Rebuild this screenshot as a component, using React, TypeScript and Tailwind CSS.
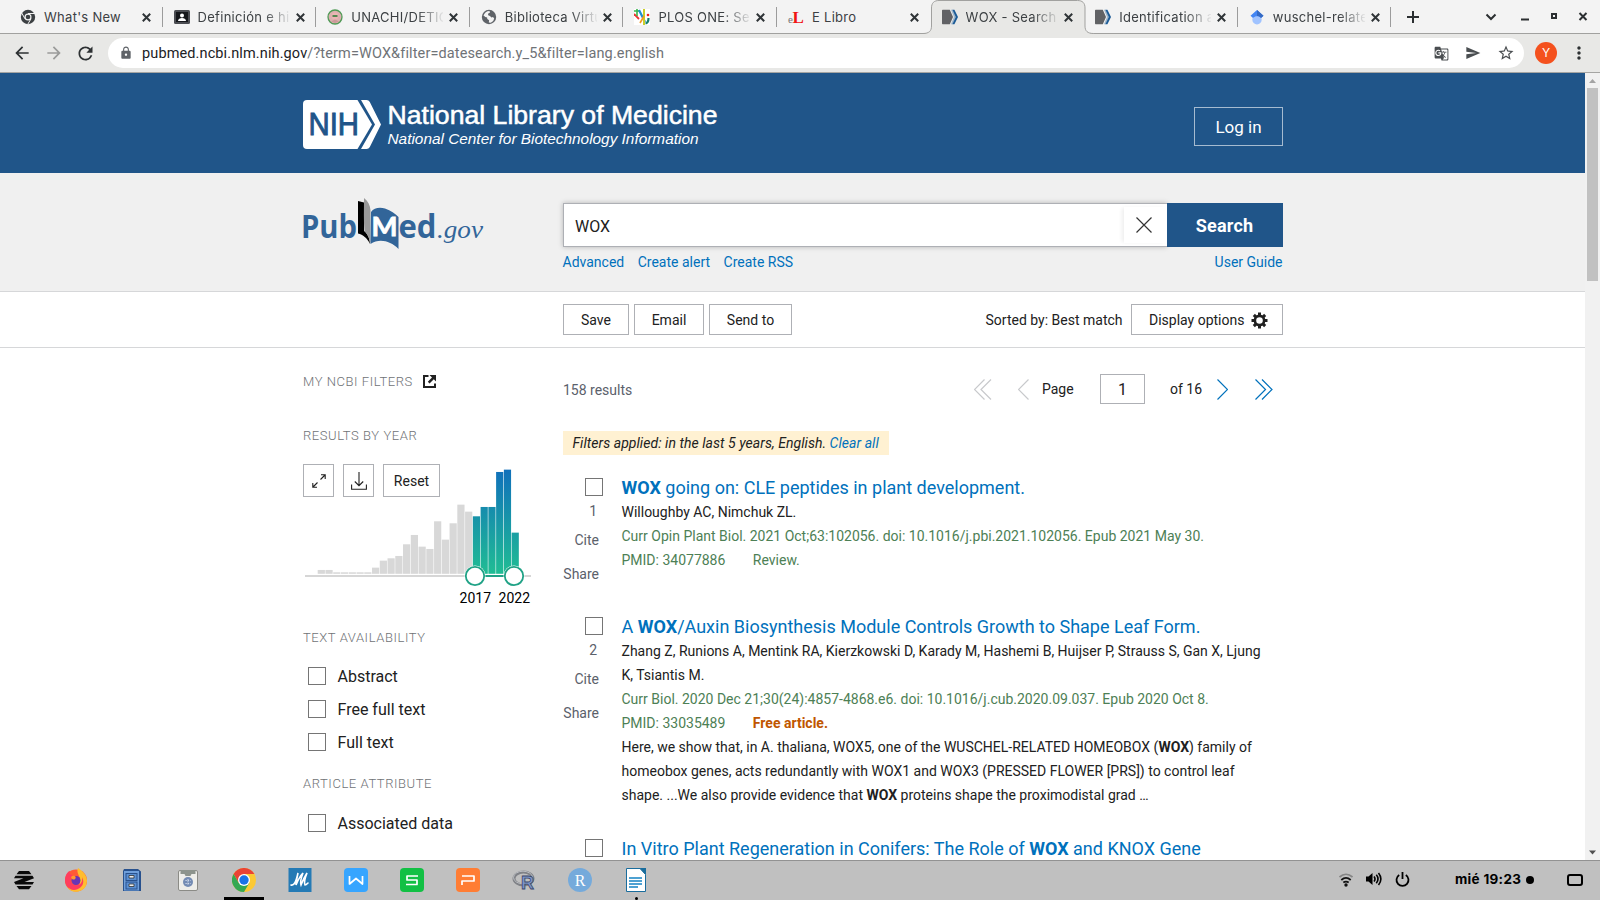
import React from "react";
import { MdArrowBack, MdArrowForward, MdRefresh, MdLock, MdStarBorder, MdMoreVert, MdSend, MdGTranslate } from "react-icons/md";

const UI = "font-['Inter',sans-serif]";

function CloseX() {
  return (
    <svg width="9" height="9" viewBox="0 0 9 9" className="shrink-0">
      <path d="M.8 .8L8.200 8.200M8.200 .8L.8 8.200" stroke="#2f3437" strokeWidth="2" />
    </svg>
  );
}

function ChromeGrey() {
  return (
    <svg width="16" height="16" viewBox="0 0 16 16">
      <circle cx="8" cy="8" r="7.200" fill="#3c4043" />
      <circle cx="8" cy="8" r="3.500" fill="#f3f3f3" />
      <circle cx="8" cy="8" r="2.300" fill="#3c4043" />
      <path d="M8 4.500H15M5 9.800L1.600 3.800M11 9.800L7.600 15.500" stroke="#f3f3f3" strokeWidth="1" />
    </svg>
  );
}

function PersonCard() {
  return (
    <svg width="16" height="16" viewBox="0 0 16 16">
      <rect x="0" y="1" width="16" height="14" rx="1.500" fill="#4b4d52" />
      <rect x="2" y="3" width="12" height="10" fill="#15171b" />
      <circle cx="8" cy="6.400" r="2" fill="#fff" />
      <path d="M4 12c0-4 8-4 8 0z" fill="#fff" />
    </svg>
  );
}

function Seal() {
  return (
    <svg width="16" height="16" viewBox="0 0 16 16">
      <circle cx="8" cy="8" r="7" fill="#dcb0b0" stroke="#4f9a55" strokeWidth="1.300" />
      <circle cx="8" cy="7" r="3.400" fill="#ecb5b4" />
      <path d="M5.500 7h5" stroke="#2f7d3a" strokeWidth="1.600" />
      <path d="M4 12.500l4-2 4 2-4 1.500z" fill="#c99" />
    </svg>
  );
}

function Globe() {
  return (
    <svg width="16" height="16" viewBox="0 0 16 16">
      <circle cx="8" cy="8" r="7.200" fill="#5f6368" />
      <path d="M2.500 6.500c1-3 3-4.500 6-4.600l.5 1.600-2 1.200.2 1.600 1.800.6 1.400 1.600 1.600-.4 1.200 1.400-1 2.400-2.400 1.800-2-.2.3-2.200-1.800-1.400-.2-1.400-1.800-.4z" fill="#f3f3f3" />
    </svg>
  );
}

function Plos() {
  return (
    <svg width="16" height="16" viewBox="0 0 16 16">
      <rect width="16" height="16" fill="#fff" />
      <path d="M0 5L5 10" stroke="#e33" strokeWidth="1.800" />
      <path d="M3 0v7M0 2h5" stroke="#39b54a" strokeWidth="1.600" />
      <path d="M5 1L11 13" stroke="#1f8fd0" strokeWidth="2.200" />
      <path d="M10 0V16" stroke="#c9cf2a" strokeWidth="2" />
      <path d="M6 14L10 7" stroke="#f39a1e" strokeWidth="1.600" />
      <circle cx="14" cy="6" r="1.300" fill="#e22" />
      <path d="M14.500 9c0 3-1 5-3 5.500" stroke="#15806c" strokeWidth="2.200" fill="none" />
    </svg>
  );
}

function ELibro() {
  return (
    <svg width="16" height="16" viewBox="0 0 16 16" className="overflow-visible">
      <text x="0" y="14" fontSize="11" fontFamily="Liberation Serif, serif" fill="#777">e</text>
      <text x="4.500" y="14" fontSize="17" fontWeight="700" fontFamily="Liberation Serif, serif" fill="#f01414">L</text>
    </svg>
  );
}

function Ncbi() {
  return (
    <svg width="16" height="16" viewBox="0 0 16 16">
      <path d="M1 .8h6.800L11 8l-3.200 7.200H1c-.6 0-1-.4-1-1V1.800c0-.6.4-1 1-1z" fill="#616265" />
      <path d="M9 .8h1.700L14 8l-3.300 7.200H9L12 8z" fill="#9fb6cb" />
      <path d="M10.400 .8h2L16 8l-3.600 7.200h-2L13.800 8z" fill="#1a5a96" />
    </svg>
  );
}

function Scholar() {
  return (
    <svg width="16" height="16" viewBox="0 0 16 16">
      <circle cx="8" cy="10.800" r="4.700" fill="#a0c3ff" />
      <path d="M8 1L1.500 6.800 4 9c2-2.400 6-2.400 8 0l2.500-2.200z" fill="#4285f4" />
      <path d="M8 1l6.500 5.800L12 9C11 7.500 9.500 7 8 7z" fill="#356ac3" />
    </svg>
  );
}

const tabs: { title: string; icon: React.ReactNode; active?: boolean; sep: boolean }[] = [
  { title: "What's New", icon: <ChromeGrey />, sep: true },
  { title: "Definición e hi", icon: <PersonCard />, sep: true },
  { title: "UNACHI/DETIC", icon: <Seal />, sep: true },
  { title: "Biblioteca Virtu", icon: <Globe />, sep: true },
  { title: "PLOS ONE: Se", icon: <Plos />, sep: true },
  { title: "E Libro", icon: <ELibro />, sep: false },
  { title: "WOX - Search", icon: <Ncbi />, active: true, sep: false },
  { title: "Identification a", icon: <Ncbi />, sep: true },
  { title: "wuschel-relate", icon: <Scholar />, sep: true },
];

function TabStrip() {
  return (
    <div className="flex h-[34px] shrink-0 border-b border-[#a1a19f] bg-[#f3f3f3]">
      <div className="w-[9px] shrink-0" />
      {tabs.map((t) => (
        <div key={t.title} className="relative flex h-[34px] w-[153.600px] shrink-0 items-center pl-[11px]">
          {t.active && (
            <svg className="absolute left-[-8px] top-0" width="172" height="34" viewBox="0 0 172 34">
              <path d="M0 34V33.500C6 33.500 8.500 31 8.500 26V8C8.500 3 11 .5 16 .5H154.500C159.500 .5 162 3 162 8V26C162 31 164.500 33.500 170.500 33.500V34Z" fill="#e8e8e6" />
              <path d="M0 33.500C6 33.500 8.500 31 8.500 26V8C8.500 3 11 .5 16 .5H154.500C159.500 .5 162 3 162 8V26C162 31 164.500 33.500 170.500 33.500" fill="none" stroke="#a1a19f" />
            </svg>
          )}
          <div className="relative flex items-center">
            {t.icon}
            <span className={`${UI} ml-2 w-[92px] whitespace-nowrap text-[13px] leading-[18px] tracking-[0.280px] text-[#3c4043] ${t.title.length > 11 ? "[mask-image:linear-gradient(to_right,black_72%,transparent_102%)]" : ""}`}>
              {t.title}
            </span>
            <span className="ml-[6px] flex">
              <CloseX />
            </span>
          </div>
          {t.sep && <span className="ml-auto h-5 w-px bg-[#9c9c9c]" />}
        </div>
      ))}
      <div className="flex flex-1 items-center">
        <svg width="12" height="12" viewBox="0 0 12 12" className="ml-[15.600px] shrink-0">
          <path d="M6 0V12M0 6H12" stroke="#2b2f31" strokeWidth="2" />
        </svg>
        <svg width="150" height="34" viewBox="1450 0 150 34" className="ml-auto shrink-0">
          <path d="M1486.500 14.500l4.500 4.500 4.500-4.500" fill="none" stroke="#2b2f31" strokeWidth="2" />
          <path d="M1521 19.500h8" stroke="#2b2f31" strokeWidth="2" />
          <rect x="1552" y="14" width="4" height="4" fill="none" stroke="#2b2f31" strokeWidth="2" />
          <path d="M1579.500 13l7 7m0-7l-7 7" stroke="#2b2f31" strokeWidth="2" />
        </svg>
      </div>
    </div>
  );
}

function AddressBar() {
  return (
    <div className="flex h-[39px] shrink-0 items-center border-b border-[#a5a5a3] bg-[#e8e8e6]">
      <div className="flex w-[108px] items-center pl-[12px]">
        <MdArrowBack size={20} color="#2d3133" />
        <MdArrowForward size={20} color="#9a9b9a" className="ml-[12px]" />
        <MdRefresh size={21} color="#2d3133" className="ml-[11px]" />
      </div>
      <div className="flex h-[30px] w-[1416px] items-center rounded-full bg-white">
        <MdLock size={14} color="#5f6368" className="ml-[11px]" />
        <span className="ml-[9px] mt-px whitespace-nowrap font-['Roboto',sans-serif] text-[14.500px] leading-5 tracking-[0.120px] text-[#6f7377]">
          <span className="text-[#202124]">pubmed.ncbi.nlm.nih.gov</span>/?term=WOX&amp;filter=datesearch.y_5&amp;filter=lang.english
        </span>
        <span className="ml-auto mr-[9px] flex items-center gap-[16px] text-[#4a4e51]">
          <MdGTranslate size={15} />
          <MdSend size={16} />
          <MdStarBorder size={18} />
        </span>
      </div>
      <span className={`${UI} ml-[11px] flex h-[22px] w-[22px] items-center justify-center rounded-full bg-[#f4511e] text-[12px] text-white`}>Y</span>
      <MdMoreVert size={20} color="#2d3133" className="ml-[12px]" />
    </div>
  );
}

function NihHeader() {
  return (
    <header className="flex h-[100px] items-center justify-between bg-[#205589] pl-[303px] pr-[302px]">
      <svg width="420" height="56" viewBox="303 97 420 56" className="mt-[4px]">
        <path d="M307 100H357.500L372 124.500L357.500 149H307a4 4 0 0 1-4-4V104a4 4 0 0 1 4-4z" fill="#fff" />
        <path d="M361 100H366.500c1.500 0 2.500 .8 3.300 2L381 124.500L369.800 147c-.8 1.300-1.800 2-3.300 2H361L375 124.500z" fill="#fff" />
        <text x="308.500" y="135" fontSize="31" textLength="50.500" lengthAdjust="spacingAndGlyphs" fontFamily="Liberation Sans, sans-serif" fill="#205589" stroke="#205589" strokeWidth=".9">NIH</text>
        <text x="387.500" y="124" fontSize="25" textLength="330" lengthAdjust="spacingAndGlyphs" fontFamily="Liberation Sans, sans-serif" fill="#fff" stroke="#fff" strokeWidth=".5">National Library of Medicine</text>
        <text x="387.500" y="144" fontSize="15" fontStyle="italic" textLength="311" lengthAdjust="spacingAndGlyphs" fontFamily="Liberation Sans, sans-serif" fill="#fff">National Center for Biotechnology Information</text>
      </svg>
      <button className="mt-[7px] h-[39px] w-[89px] border border-[#a6bbd0] pt-[2px] text-[17px] text-white">Log in</button>
    </header>
  );
}

function PubMedLogo() {
  return (
    <svg width="190" height="60" viewBox="303 195 190 60" className="shrink-0 overflow-visible">
      <text x="301" y="238" fontSize="33" fontWeight="700" textLength="56" lengthAdjust="spacingAndGlyphs" fontFamily="Open Sans, sans-serif" fill="#326599">Pub</text>
      <path d="M358 201l6 1.500V231c3 2 5.500 6 6 13-3-6-7-9.500-12-10.500z" fill="#000" />
      <path d="M364 198c4 3 6 7 6.500 12v34c-1-6-3-10-6-13-1-10-.5-22-.5-33z" fill="#999" />
      <path d="M371 212c3-4 8-5 14-3.500 6 2 10 5 13.500 8.500v32c-8-8-19-11-28-5z" fill="#326599" />
      <text x="371.500" y="236" fontSize="27" fontWeight="700" textLength="26" lengthAdjust="spacingAndGlyphs" fontFamily="Lato, sans-serif" fill="#fff" stroke="#fff" strokeWidth=".8">M</text>
      <text x="398.500" y="238" fontSize="33" fontWeight="700" textLength="38" lengthAdjust="spacingAndGlyphs" fontFamily="Open Sans, sans-serif" fill="#326599">ed</text>
      <text x="437" y="238" fontSize="26" fontStyle="italic" textLength="46" lengthAdjust="spacingAndGlyphs" fontFamily="Liberation Serif, serif" fill="#326599">.gov</text>
    </svg>
  );
}

function SearchBar() {
  return (
    <div className="flex h-[119px] border-b border-[#d6d7d9] bg-[#f0f0f0] pl-[303px]">
      <div className="w-[260px] pt-[22px]">
        <PubMedLogo />
      </div>
      <div className="w-[720px] pt-[30px]">
        <div className="flex h-11">
          <div className="flex w-[604px] items-center justify-between border border-r-0 border-[#aeb0b5] bg-white pl-[11px] shadow-[0_0_5px_rgba(0,0,0,0.25)]">
            <span className="pt-[3px] text-[16px]">WOX</span>
            <span className="flex h-[36px] w-[43px] items-center justify-center bg-white shadow-[-3px_0_4px_-1px_rgba(0,0,0,0.07)]">
              <svg width="16" height="16" viewBox="0 0 16 16" className="mr-[3px]">
                <path d="M.5 .5l15 15m0-15l-15 15" stroke="#333" strokeWidth="1.200" />
              </svg>
            </span>
          </div>
          <button className="relative w-[116px] bg-[#205589] pr-px text-[18px] font-bold tracking-[0.200px] text-white">Search</button>
        </div>
        <div className="-ml-[0.500px] mt-[5px] flex gap-[13.500px] text-[14px] leading-5 text-[#0071bc]">
          <span>Advanced</span>
          <span>Create alert</span>
          <span>Create RSS</span>
          <span className="ml-auto mr-[0.500px]">User Guide</span>
        </div>
      </div>
    </div>
  );
}

function ActionBar() {
  const btn = "h-[31px] border border-[#aeb0b5] bg-white pt-px";
  return (
    <div className="flex h-[56px] items-center border-b border-[#d6d7d9] pl-[563px] pr-[302px] text-[14px]">
      <button className={`${btn} w-[66px]`}>Save</button>
      <button className={`${btn} ml-[5px] w-[70px]`}>Email</button>
      <button className={`${btn} ml-[5px] w-[83px]`}>Send to</button>
      <span className="ml-auto pt-px">Sorted by: Best match</span>
      <button className={`${btn} ml-[8.500px] flex w-[152px] items-center gap-[7px] pl-[17px]`}>
        Display options
        <svg width="17" height="17" viewBox="-8.500 -8.500 17 17">
          <circle r="4.600" fill="none" stroke="#212121" strokeWidth="2.600" />
          {[0, 45, 90, 135, 180, 225, 270, 315].map((a) => (
            <rect key={a} x="-1.500" y="-8" width="3" height="3.500" fill="#212121" transform={`rotate(${a})`} />
          ))}
        </svg>
      </button>
    </div>
  );
}

const barTops = [629, 629, 636, 636, 636, 636, 636, 622, 601, 594, 587, 552, 524, 559, 566, 483, 538, 489, 433, 454, 468, 440, 440, 335, 328, 517];

function YearChart() {
  return (
    <svg width="235" height="150" viewBox="303 462 235 150">
      <defs>
        <linearGradient id="yr" gradientUnits="userSpaceOnUse" x1="0" y1="469" x2="0" y2="573">
          <stop offset="0" stopColor="#1070bb" />
          <stop offset="1" stopColor="#20bc94" />
        </linearGradient>
      </defs>
      {barTops.map((t, i) => {
        const x = 317.3 + i * 7.757;
        const y = 360 + t / 3;
        return <rect key={i} x={x + 0.4} y={y + 0.3} width="7.200" height={573.5 - y} fill={i > 19 ? "url(#yr)" : "#d8d8d8"} />;
      })}
      <rect x="305" y="575" width="226" height="2" fill="#d6d6d6" />
      <rect x="475" y="575" width="39" height="2" fill="#20a286" />
      {[475, 514].map((x) => (
        <g key={x}>
          <circle cx={x} cy="576" r="10.500" fill="#fff" />
          <circle cx={x} cy="576" r="9.200" fill="#fff" stroke="#20a286" strokeWidth="1.800" />
        </g>
      ))}
      <text x="459.500" y="603" fontSize="14" textLength="31.500" fontFamily="Roboto, sans-serif" fill="#000">2017</text>
      <text x="498.500" y="603" fontSize="14" textLength="31.500" fontFamily="Roboto, sans-serif" fill="#000">2022</text>
    </svg>
  );
}

function Check({ label }: { label: string }) {
  return (
    <div className="flex h-[33px] items-center pl-[5px] text-[16px]">
      <span className="mr-[11.500px] h-[18px] w-[18px] border border-[#757575] bg-white" />
      <span className="pt-[2px]">{label}</span>
    </div>
  );
}

function Sidebar() {
  const head = "text-[13px] leading-4 tracking-[0.570px] text-[#6f7276] font-light whitespace-nowrap";
  return (
    <aside className="w-[260px] pt-[26px]">
      <div className={`${head} flex items-center`}>
        MY NCBI FILTERS
        <svg width="13" height="13" viewBox="0 0 13 13" className="mb-[2px] ml-[10px]">
          <path d="M5.500 1H1V12H12V8.500" fill="none" stroke="#212121" strokeWidth="2" />
          <path d="M6.500 0H13V6.500L10.800 4.300 6.500 8.500 4.800 6.800 9 2.500z" fill="#212121" />
        </svg>
      </div>
      <div className={`${head} mt-[38px]`}>RESULTS BY YEAR</div>
      <div className="relative mt-[18px] h-[152px]">
        <YearChart />
        <div className="absolute left-0 top-[2px] flex text-[14px]">
          <span className="flex h-[33px] w-[31px] items-center justify-center border border-[#aeb0b5]">
            <svg width="14" height="14" viewBox="0 0 14 14" fill="none" stroke="#212121" strokeWidth="1.100">
              <path d="M9 .8h4.200V5M13 1L8.500 5.500M5 13.200H.8V9M1 13l4.500-4.500" />
            </svg>
          </span>
          <span className="ml-[9px] flex h-[33px] w-[31px] items-center justify-center border border-[#aeb0b5]">
            <svg width="16" height="18" viewBox="0 0 16 18" fill="none" stroke="#212121" strokeWidth="1.100">
              <path d="M8 0V14M3.800 9.500L8 13.700 12.200 9.500M.6 12.500V17.200H15.400V12.500" />
            </svg>
          </span>
          <span className="ml-[9px] flex h-[33px] w-[57px] items-center justify-center border border-[#aeb0b5] pt-px">Reset</span>
        </div>
      </div>
      <div className={`${head} mt-[16px]`}>TEXT AVAILABILITY</div>
      <div className="mt-[13px]">
        <Check label="Abstract" />
        <Check label="Free full text" />
        <Check label="Full text" />
      </div>
      <div className={`${head} mt-[18px]`}>ARTICLE ATTRIBUTE</div>
      <div className="mt-[14px]">
        <Check label="Associated data" />
      </div>
    </aside>
  );
}

function Result({ n, min, title, children }: { n?: number; min: string; title: React.ReactNode; children?: React.ReactNode }) {
  return (
    <article className={`flex ${min}`}>
      <div className="flex w-[36px] shrink-0 flex-col items-end text-[14px] text-[#5b616b]">
        <span className="mr-[-4px] mt-[2px] h-[18px] w-[18px] shrink-0 border border-[#757575] bg-white" />
        {n && (
          <>
            <span className="mr-[2px] mt-[3px] leading-6">{n}</span>
            <span className="mt-[5px] leading-6">Cite</span>
            <span className="mt-[10px] leading-6">Share</span>
          </>
        )}
      </div>
      <div className="ml-[22.500px] whitespace-nowrap text-[14px] leading-6">
        <h2 className="text-[18px] leading-6 text-[#0071bc]">{title}</h2>
        {children}
      </div>
    </article>
  );
}

function Chev({ d, w, c }: { d: string; w: number; c: string }) {
  return (
    <svg width={w} height="21" viewBox={`0 0 ${w} 21`} fill="none" stroke={c} strokeWidth="1.200">
      <path d={d} />
    </svg>
  );
}

function Results() {
  return (
    <main className="w-[720px]">
      <div className="flex h-[83px] items-center text-[14px]">
        <span className="pt-[2px] text-[#5b616b]">158 results</span>
        <span className="ml-auto flex w-[309px] items-center">
          <Chev w={18} c="#c8c9cc" d="M10.500 .5l-10 10 10 10M17 .5l-10 10 10 10" />
          <span className="ml-[26px] flex">
            <Chev w={11} c="#c8c9cc" d="M10.500 .5l-10 10 10 10" />
          </span>
          <span className="ml-[13px]">Page</span>
          <span className="-mt-[2px] ml-auto mr-[25px] flex h-[30px] w-[45px] items-center justify-center border border-[#aeb0b5] pt-[2px] text-[16px]">1</span>
          <span className="mr-[15px]">of 16</span>
          <Chev w={11} c="#0071bc" d="M.5 .5l10 10-10 10" />
          <span className="ml-[27px] mr-[10px] flex">
            <Chev w={18} c="#0071bc" d="M.5 .5l10 10-10 10M7 .5l10 10-10 10" />
          </span>
        </span>
      </div>
      <div className="flex">
        <span className="h-6 w-[326px] whitespace-nowrap bg-[#fff1d2] pl-[9.500px] text-[14px] italic leading-6 tracking-[0.050px]">
          Filters applied: in the last 5 years, English. <span className="text-[#0071bc]">Clear all</span>
        </span>
      </div>
      <div className="mt-[21px]">
        <Result n={1} min="h-[139px]" title={<><b>WOX</b> going on: CLE peptides in plant development.</>}>
          <p>Willoughby AC, Nimchuk ZL.</p>
          <p className="text-[#4d8055]">Curr Opin Plant Biol. 2021 Oct;63:102056. doi: 10.1016/j.pbi.2021.102056. Epub 2021 May 30.</p>
          <p className="text-[#4d8055]">PMID: 34077886<span className="ml-[27.500px]">Review.</span></p>
        </Result>
        <Result n={2} min="h-[222px]" title={<>A <b>WOX</b>/Auxin Biosynthesis Module Controls Growth to Shape Leaf Form.</>}>
          <p>Zhang Z, Runions A, Mentink RA, Kierzkowski D, Karady M, Hashemi B, Huijser P, Strauss S, Gan X, Ljung<br />K, Tsiantis M.</p>
          <p className="text-[#4d8055]">Curr Biol. 2020 Dec 21;30(24):4857-4868.e6. doi: 10.1016/j.cub.2020.09.037. Epub 2020 Oct 8.</p>
          <p className="text-[#4d8055]">PMID: 33035489<b className="ml-[27.500px] text-[#c05600]">Free article.</b></p>
          <p>
            Here, we show that, in A. thaliana, WOX5, one of the WUSCHEL-RELATED HOMEOBOX (<b>WOX</b>) family of<br />
            homeobox genes, acts redundantly with WOX1 and WOX3 (PRESSED FLOWER [PRS]) to control leaf<br />
            shape. ...We also provide evidence that <b>WOX</b> proteins shape the proximodistal grad …
          </p>
        </Result>
        <Result min="h-[24px]" title={<>In Vitro Plant Regeneration in Conifers: The Role of <b>WOX</b> and KNOX Gene</>} />
      </div>
    </main>
  );
}

const dock: { id: string; art: React.ReactNode; mark?: "bar" | "dot" }[] = [
  { id: "menu", art: <g fill="#0a0a0a"><path d="M7 3h10l2.500 3.200h-15zM3.500 7.800H20.500L22 10.300L12.500 14H22L20.500 16.500H3.500L2 14L11.500 10.300H2zM7 21.300h10l2.500-3.200h-15z" /></g> },
  { id: "firefox", art: <><circle cx="12" cy="12.500" r="11" fill="#ff5a36" /><path d="M14 0c6 4 9 8 9 13a11 11 0 0 1-20 6c8 4 14-1 13-8-.5-4-4-6-2-11z" fill="#ffbd2e" /><path d="M2 7C4 3 6 3 6 3c-1 3 1 4 3 4-4 3-3 9 2 10 5 1 8-3 7-8 4 7-2 13-8 13C3 22-1 14 2 7z" fill="#ff3d5d" /><circle cx="12" cy="12.500" r="4.500" fill="#6a35b5" /><path d="M7 9c3-3 6 0 4 2-1 1-3 1-4-2z" fill="#ff9a2e" /></> },
  { id: "files", art: <><path d="M4 1h14l3 2.500V23H3V3z" fill="#28518d" /><rect x="4" y="3" width="15" height="19.500" fill="#6f9fdb" /><g fill="#5a8fd2" stroke="#28518d"><rect x="6" y="5.500" width="11" height="7" /><rect x="6" y="14" width="11" height="7" /></g><path d="M9 7.500h5v2.500H9zM9 16h5v2.500H9z" fill="#eee" stroke="#333" strokeWidth=".8" /></> },
  { id: "phone", art: <><rect x="2.500" y="2.500" width="19" height="20" rx="1.500" fill="#eeeeea" stroke="#8b8b86" /><path d="M4.500 2h15v4h-4l-1 2h-5L8.500 6h-4z" fill="#8d948d" /><circle cx="12" cy="14" r="5" fill="#748cb4" /><path d="M9.500 12.500h5M9.500 15.500h5M12 11v6" stroke="#d4dfef" strokeDasharray="1.200 1" /></> },
  { id: "chrome", mark: "bar", art: <><circle cx="12" cy="12" r="12" fill="#fcc934" /><path d="M12 6h10.400A12 12 0 0 0 1.600 6l5.200 9z" fill="#ea4335" /><path d="M1.600 6A12 12 0 0 0 12 24l5.200-9H6.800z" fill="#34a853" /><circle cx="12" cy="12" r="6" fill="#fff" /><circle cx="12" cy="12" r="4.700" fill="#1a73e8" /></> },
  { id: "mendeley", art: <><rect x=".5" width="23" height="24" fill="#247ab5" /><path d="M3 17c3 1 5-3 7-12-1 5-2 9-2 12 2-5 4-9 7-12-2 5-3 9-2 12 2-5 4-9 6-12-2 5-3 10-2 12 1 0 2-1 3-2" fill="none" stroke="#fff" strokeWidth="1.600" strokeLinecap="round" /></> },
  { id: "writer", art: <><rect width="24" height="24" rx="4" fill="#36a5ff" /><path d="M5.500 8v8l6.500-5.500L18.500 16V8" fill="none" stroke="#fff" strokeWidth="1.700" strokeLinejoin="round" /></> },
  { id: "sheets", art: <><rect width="24" height="24" rx="4" fill="#12c044" /><path d="M18 8H7v4h10v4.500H6" fill="none" stroke="#fff" strokeWidth="1.700" strokeLinejoin="round" /></> },
  { id: "slides", art: <><rect width="24" height="24" rx="4" fill="#ff7d34" /><path d="M6 8h12v5H6v4" fill="none" stroke="#fff" strokeWidth="1.700" strokeLinejoin="round" /></> },
  { id: "r", art: <><ellipse cx="11.500" cy="10.500" rx="9.500" ry="6.500" fill="none" stroke="#808287" strokeWidth="3" /><ellipse cx="11" cy="9.500" rx="9.500" ry="6.300" fill="none" stroke="#c8cacf" strokeWidth=".8" /><text x="9" y="21" fontSize="18" fontWeight="700" fontFamily="Liberation Sans, sans-serif" fill="#7d96c8" stroke="#39466c" strokeWidth=".8">R</text></> },
  { id: "rstudio", art: <><circle cx="12" cy="12" r="12" fill="#75aadb" /><text x="12" y="17.500" fontSize="16" textAnchor="middle" fontFamily="Liberation Serif, serif" fill="#fff">R</text></> },
  { id: "docs", mark: "dot", art: <><path d="M2.500 .5h13.500l5.500 6V23.500H2.500z" fill="#fff" stroke="#1a6d9d" /><path d="M15.500 0H22V7z" fill="#1a6d9d" /><path d="M5 10h13M5 13h13M5 16h13M5 19h9" stroke="#1583c4" strokeWidth="1.300" /></> },
];

function Taskbar() {
  return (
    <footer className="flex h-10 shrink-0 items-center border-t border-[#929292] bg-[#c0c0c0] text-black">
      <div className="flex">
        {dock.map((d, i) => (
          <div key={d.id} className={`relative flex h-[39px] items-center justify-center pb-px ${i === 0 ? "w-[48px]" : "w-[56px]"}`}>
            <svg width="24" height="24" viewBox="0 0 24 24">{d.art}</svg>
            {d.mark === "bar" && <span className="absolute bottom-0 h-[3px] w-10 bg-black" />}
            {d.mark === "dot" && <span className="absolute bottom-0 h-[3px] w-[3px] rounded-full bg-black" />}
          </div>
        ))}
      </div>
      <div className="ml-auto flex items-center pb-px">
        <svg width="14" height="14" viewBox="0 0 14 14" fill="none" strokeWidth="1.800">
          <path d="M.5 4c4-3.500 9-3.500 13 0" stroke="#858585" />
          <path d="M2.300 7c3-2.700 6.400-2.700 9.400 0M4.300 9.500c2-1.400 3.400-1.400 5.400 0" stroke="#111" />
          <circle cx="7" cy="12" r="1.700" fill="#111" />
        </svg>
        <svg width="16" height="14" viewBox="0 0 16 14" className="mb-[2px] ml-[13px]" fill="none" stroke="#000" strokeWidth="1.600">
          <path d="M0 4.500h2.500L6.500 1v12L2.500 9.500H0z" fill="#000" stroke="none" />
          <path d="M8 4.500c1.300 1.600 1.300 3.400 0 5M10.300 2.800c2.200 2.700 2.200 5.700 0 8.400M12.500 1c3 3.800 3 8.200 0 12" />
        </svg>
        <svg width="15" height="15" viewBox="0 0 15 15" className="mb-px ml-[13px]" fill="none" stroke="#000" strokeWidth="1.800">
          <path d="M4.200 2.900a6 6 0 1 0 6.600 0M7.500 0v7" />
        </svg>
        <span className={`${UI} mb-px ml-[45px] w-[67px] whitespace-nowrap text-[13.500px] font-bold tracking-[0.300px]`}>mié 19:23</span>
        <span className="ml-[4px] h-2 w-2 rounded-full bg-black" />
        <span className="ml-[33px] mr-[17px] h-[12px] w-[16px] rounded-[3px] border-2 border-black" />
      </div>
    </footer>
  );
}

export default function App() {
  return (
    <div className="flex h-[900px] w-[1600px] flex-col overflow-hidden bg-white font-['Roboto',sans-serif] text-[#212121]">
      <TabStrip />
      <AddressBar />
      <div className="flex h-[787px] shrink-0 overflow-hidden">
        <div className="w-[1585px]">
          <NihHeader />
          <SearchBar />
          <ActionBar />
          <div className="flex pl-[303px]">
            <Sidebar />
            <Results />
          </div>
        </div>
        <div className="flex w-[15px] flex-col items-center justify-between bg-[#f1f1f1]">
          <div className="flex flex-col items-center">
            <svg width="15" height="15" viewBox="0 0 15 15"><path d="M4 10l3.500-4 3.500 4z" fill="#a3a3a3" /></svg>
            <div className="h-[193px] w-[11px] bg-[#c1c1c1]" />
          </div>
          <svg width="15" height="15" viewBox="0 0 15 15"><path d="M4 5.500l3.500 4 3.500-4z" fill="#505050" /></svg>
        </div>
      </div>
      <Taskbar />
    </div>
  );
}
